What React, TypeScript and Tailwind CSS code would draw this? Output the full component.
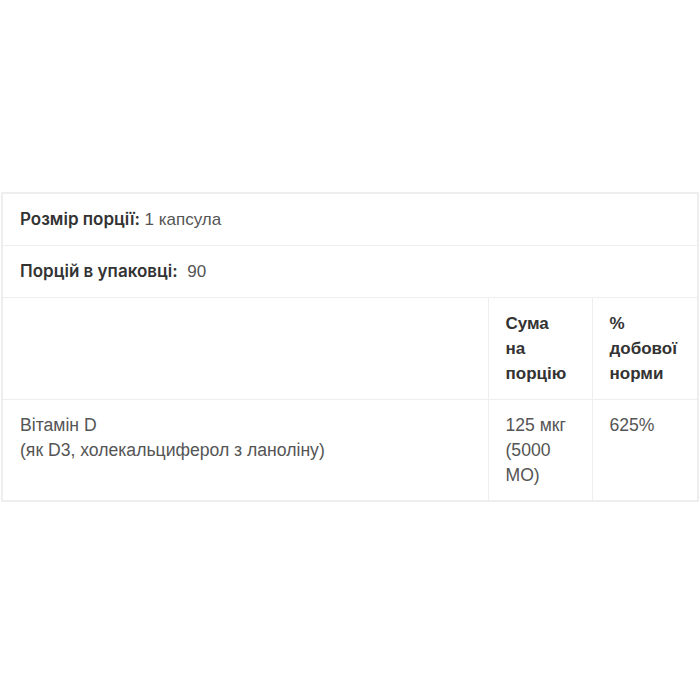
import React from "react";

export default function App() {
  const bold = "font-['Inter',sans-serif] font-semibold text-[17px] text-[#333]";
  const reg = "font-['Liberation_Sans',Arial,sans-serif] text-[17px] text-[#555]";
  const base = "border border-[#eeeeee] px-[17px] pt-[13px] align-top leading-[25px]";
  const cell = base + " font-['Liberation_Sans',Arial,sans-serif] text-[17px]";
  const regCell =
    base + " pb-[12px] font-['Liberation_Sans',Arial,sans-serif] text-[17.6px] text-[#555]";
  return (
    <div className="w-[700px] h-[700px] bg-white pt-[192px]">
      <table className="w-[698px] border-collapse border-2 border-[#eeeeee] ml-[1px]">
        <tbody>
          <tr>
            <td colSpan={3} className={cell + " pb-[13px]"}>
              <span className={bold}>Розмір порції:</span>
              <span className={reg}> 1 капсула</span>
            </td>
          </tr>
          <tr>
            <td colSpan={3} className={cell + " pb-[13px]"}>
              <span className={bold}>Порцій в упаковці:</span>
              <span className={reg}>&nbsp; 90</span>
            </td>
          </tr>
          <tr>
            <td className={cell + " pb-[13px] w-[486px]"}></td>
            <td className={cell + " pb-[13px] w-[104px] " + bold}>
              Сума
              <br />
              на
              <br />
              порцію
            </td>
            <td className={cell + " pb-[13px] " + bold}>
              %
              <br />
              добової
              <br />
              норми
            </td>
          </tr>
          <tr>
            <td className={regCell}>
              Вітамін D
              <br />
              (як D3, холекальциферол з ланоліну)
            </td>
            <td className={regCell}>
              125 мкг
              <br />
              (5000
              <br />
              МО)
            </td>
            <td className={regCell}>625%</td>
          </tr>
        </tbody>
      </table>
    </div>
  );
}
